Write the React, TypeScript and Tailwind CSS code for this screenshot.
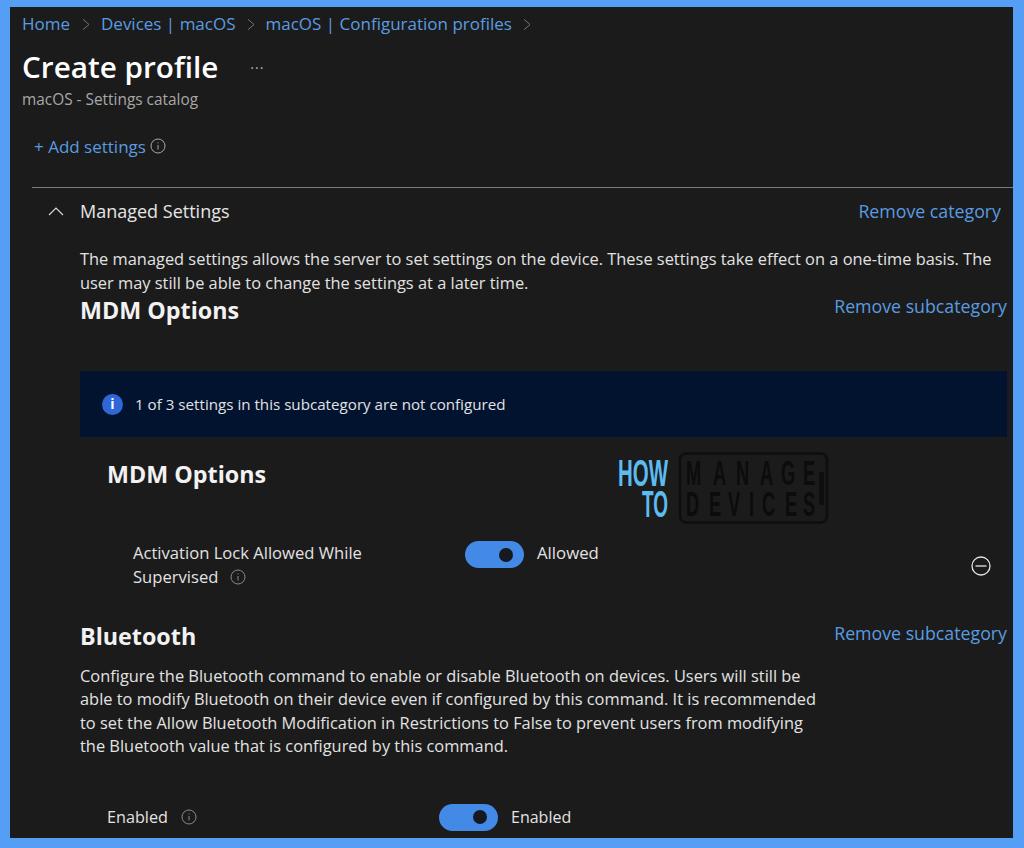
import React from "react";

const InfoIcon = ({ className = "" }: { className?: string }) => (
  <svg viewBox="0 0 16 16" className={className} fill="none" stroke="currentColor">
    <circle cx="8" cy="8" r="7" strokeWidth="1" />
    <path d="M8 7v4.5" strokeWidth="1" />
    <circle cx="8" cy="4.8" r="0.6" fill="currentColor" stroke="none" />
  </svg>
);

const Chevron = () => (
  <svg viewBox="0 0 8 12" className="w-[8px] h-[13px] text-[#7d7d7d]" fill="none" stroke="currentColor" strokeWidth="0.9">
    <path d="M1 0.8 7 6 1 11.2" />
  </svg>
);

const Toggle = () => (
  <div className="w-[59px] h-[27px] rounded-full bg-[#4389e6] flex items-center justify-end pr-[11px] shrink-0">
    <div className="w-[14px] h-[14px] rounded-full bg-[#161a20]" />
  </div>
);

const Link = ({ children }: { children: React.ReactNode }) => (
  <span className="text-[#5a9be0] text-[17.75px] leading-[24px] whitespace-nowrap">{children}</span>
);

const sx = (list: number[]) => list.map((v) => (v / 0.52).toFixed(1)).join(" ");

const Logo = () => (
  <svg width="212" height="76" viewBox="0 0 212 76" className="block">
    <g fill="#5cbcf0" fontFamily="'Liberation Sans', sans-serif" fontWeight="700" fontSize="36">
      <text x="0" y="34" textLength="50" lengthAdjust="spacingAndGlyphs">HOW</text>
      <text x="24" y="65" textLength="26" lengthAdjust="spacingAndGlyphs">TO</text>
    </g>
    <rect x="62" y="1.5" width="147" height="69" rx="6" fill="none" stroke="#0e0e0e" strokeWidth="2.5" />
    <rect x="201" y="20" width="5" height="33" rx="1.5" fill="#0e0e0e" />
    <g fill="#0c0c0c" fontFamily="'Liberation Sans', sans-serif" fontWeight="700" fontSize="35" transform="scale(0.52 1)">
      <text x={sx([68, 95, 118, 142, 163, 185])} y="33">MANAGE</text>
      <text x={sx([68, 91, 110, 131, 144, 167, 185])} y="64">DEVICES</text>
    </g>
  </svg>
);

export default function App() {
  return (
    <div
      className="w-[1024px] h-[848px] bg-[#549ff5] pt-[7px] pl-[10px] pr-[11px] pb-[10px] overflow-hidden"
      style={{ fontFamily: "'Open Sans', 'Noto Sans', sans-serif" }}
    >
      <div className="w-full h-full bg-[#1b1b1b] overflow-hidden text-[#e6e6e6]">
        {/* Breadcrumb */}
        <div className="h-[31px] pl-[12px] pt-[3px] flex items-center gap-[11px] text-[17px] text-[#5a9be0] whitespace-nowrap">
          <span className="w-[49px]">Home</span>
          <Chevron />
          <span>Devices | macOS</span>
          <Chevron />
          <span>macOS | Configuration profiles</span>
          <Chevron />
        </div>

        {/* Title */}
        <div className="pl-[12px] h-[44px] flex items-center gap-[32px] mt-[7px]">
          <span className="text-[29.7px] leading-[40px] font-semibold text-white">Create profile</span>
          <span className="text-[#b5b5b5] text-[14px] leading-none tracking-[1px] mt-[1px]">···</span>
        </div>
        <div className="pl-[12px] text-[15.4px] leading-[20px] text-[#a8a8a8] mt-[1px]">macOS - Settings catalog</div>

        {/* Add settings */}
        <div className="pl-[24px] mt-[25px] h-[24px] flex items-center gap-[4px] text-[#5a9be0] text-[17px]">
          <span>+ Add settings</span>
          <InfoIcon className="w-[16px] h-[16px] text-[#a8a8a8] -mt-[2px]" />
        </div>

        {/* Divider */}
        <div className="ml-[22px] mt-[28px] h-px bg-[#7a7a7a]" />

        {/* Managed settings */}
        <div className="mt-[9px] pl-[38px] pr-[12px] h-[28px] flex items-center justify-between">
          <div className="flex items-center gap-[16px]">
            <svg viewBox="0 0 16 10" className="w-[16px] h-[10px] text-[#dcdcdc]" fill="none" stroke="currentColor" strokeWidth="1.1">
              <path d="M1 9 8 2l7 7" />
            </svg>
            <span className="text-[18px]">Managed Settings</span>
          </div>
          <Link>Remove category</Link>
        </div>

        <div className="ml-[70px] mr-[14px] mt-[22px] text-[16.4px] leading-[24px] text-[#e2e2e2]">
          The managed settings allows the server to set settings on the device. These settings take effect on a one-time basis. The user may still be able to change the settings at a later time.
        </div>

        <div className="ml-[70px] mr-[6px] -mt-[1px] flex items-start justify-between">
          <span className="text-[23.3px] leading-[30px] font-bold text-[#f2f2f2] mt-[1px]">MDM Options</span>
          <Link>Remove subcategory</Link>
        </div>

        {/* Banner */}
        <div className="ml-[70px] mr-[6px] mt-[46px] h-[66px] bg-[#01132f] flex items-center pl-[22px] gap-[12px]">
          <div className="w-[21px] h-[21px] rounded-full bg-[#2f66d8] flex items-center justify-center text-white text-[14px] font-bold leading-none">i</div>
          <span className="text-[15.17px] text-[#e2e2e2]">1 of 3 settings in this subcategory are not configured</span>
        </div>

        {/* MDM Options section */}
        <div className="ml-[97px] h-[76px] flex items-start">
          <span className="text-[23.3px] leading-[30px] font-bold text-[#f2f2f2] mt-[22px] w-[511px]">MDM Options</span>
          <div className="mt-[15px]"><Logo /></div>
        </div>

        {/* Activation lock */}
        <div className="ml-[123px] mr-[22px] mt-[28px] flex items-start">
          <div className="w-[332px] text-[16.6px] leading-[24px] text-[#e2e2e2]">
            <div>Activation Lock Allowed While</div>
            <div className="flex items-center gap-[12px]">
              <span>Supervised</span>
              <InfoIcon className="w-[16px] h-[16px] text-[#8a8a8a]" />
            </div>
          </div>
          <Toggle />
          <span className="ml-[13px] text-[16.8px] leading-[24px] text-[#e2e2e2]">Allowed</span>
          <svg viewBox="0 0 20 20" className="ml-auto w-[20px] h-[20px] mt-[15px] text-[#e6e6e6]" fill="none" stroke="currentColor" strokeWidth="1.3">
            <circle cx="10" cy="10" r="9" />
            <path d="M4.5 10h11" />
          </svg>
        </div>

        {/* Bluetooth */}
        <div className="ml-[70px] mr-[6px] mt-[32px] flex items-start justify-between">
          <span className="text-[23.3px] leading-[30px] font-bold text-[#f2f2f2]">Bluetooth</span>
          <Link>Remove subcategory</Link>
        </div>
        <div className="ml-[70px] w-[745px] mt-[13px] text-[16.4px] leading-[23.4px] text-[#e2e2e2]">
          Configure the Bluetooth command to enable or disable Bluetooth on devices. Users will still be able to modify Bluetooth on their device even if configured by this command. It is recommended to set the Allow Bluetooth Modification in Restrictions to False to prevent users from modifying the Bluetooth value that is configured by this command.
        </div>

        {/* Enabled */}
        <div className="ml-[97px] mt-[46px] flex items-center">
          <div className="w-[332px] flex items-center gap-[13px] text-[16.2px] text-[#e2e2e2]">
            <span>Enabled</span>
            <InfoIcon className="w-[16px] h-[16px] text-[#8a8a8a]" />
          </div>
          <Toggle />
          <span className="ml-[13px] text-[16px] text-[#e2e2e2]">Enabled</span>
        </div>
      </div>
    </div>
  );
}
